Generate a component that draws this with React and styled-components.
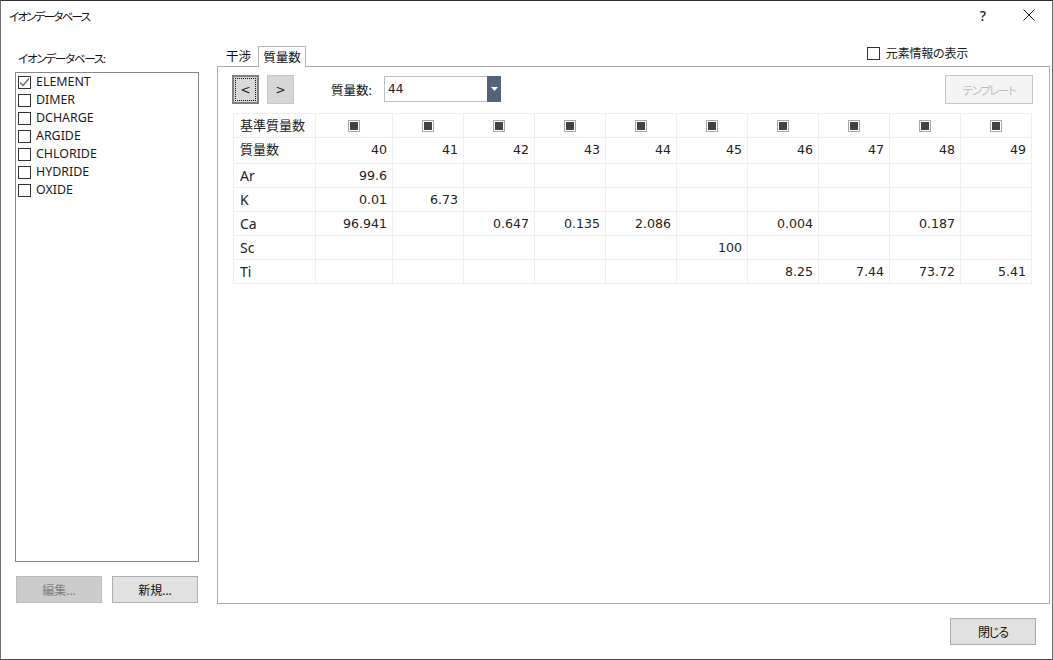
import React from "react";
import styled, { createGlobalStyle } from "styled-components";

const Global = createGlobalStyle`
  html, body { margin: 0; padding: 0; background: #fff; }
  * { box-sizing: border-box; }
  body { font-family: "Noto Sans", "Noto Sans CJK JP", sans-serif; font-size: 12px; color: #111; }
`;
const kana = `font-family: "Noto Sans", "Noto Sans CJK JP", sans-serif; font-feature-settings: "palt";`;

const Window = styled.div`
  width: 1053px; height: 660px; display: flex; flex-direction: column; background: #fff;
  border: 1px solid #6f6f6f; border-top-color: #2e2e2e; border-bottom-color: #4a4a4a; overflow: hidden;
`;
const TitleBar = styled.div`
  height: 32px; flex: none; display: flex; align-items: center; padding-left: 8px; position: relative;
`;
const Title = styled.div`${kana} font-size: 11.5px; letter-spacing: -1.75px; line-height: 30px;`;
const TitleActions = styled.div`margin-left: auto; display: flex; align-items: center; padding: 0 17px 4px 0; gap: 37px;`;
const Help = styled.span`font-family: "Noto Sans", sans-serif; font-size: 14px; font-weight: 500; color: #222;`;

const Content = styled.div`flex: none; height: 571px; display: flex; padding-top: 13px; padding-left: 14px;`;
const Sidebar = styled.div`width: 184px; display: flex; flex-direction: column; padding-bottom: 1px;`;
const SideLabel = styled.div`${kana} height: 26px; font-size: 11.5px; line-height: 25px; padding-left: 3px; letter-spacing: -1.2px;`;
const List = styled.div`flex: 1; border: 1px solid #828790; display: flex; flex-direction: column;`;
const ListRow = styled.div`height: 18px; display: flex; align-items: center; padding-left: 2px; gap: 5px; line-height: 18px; font-size: 12.4px; color: #1a1a1a;`;
const Box = styled.span`
  width: 13px; height: 13px; flex: none; border: 1px solid #333; background: #fff; display: flex; align-items: center; justify-content: center;
`;
const SideButtons = styled.div`display: flex; gap: 10px; margin-top: 14px; padding-left: 1px;`;
const Btn = styled.button`
  ${kana} font-size: 12px; height: 27px; width: ${p => p.$w || 86}px; padding: 0;
  background: ${p => (p.$disabled ? "#cccccc" : "#e1e1e1")};
  border: 1px solid ${p => (p.$disabled ? "#bcbcbc" : "#adadad")};
  color: ${p => (p.$disabled ? "#808080" : "#111")};
`;
const CloseBtn = styled(Btn)`letter-spacing: -1px;`;

const Main = styled.div`width: 833px; margin-left: 18px; display: flex; flex-direction: column;`;
const TabRow = styled.div`height: 21px; flex: none; display: flex; margin-bottom: -1px; position: relative; z-index: 1;`;
const Tab = styled.div`
  ${kana} height: ${p => (p.$active ? 21 : 20)}px; width: ${p => p.$w}px; text-align: center; line-height: 21px; font-size: 12.5px;
  ${p => (p.$active ? "border: 1px solid #b4b4b4; border-bottom: 0; background: #fff;" : "padding-left: 2px;")}
`;
const ElementToggle = styled.label`
  ${kana} margin-left: auto; margin-right: 82px; display: flex; align-items: flex-start; gap: 6px; line-height: 14px; margin-top: 1px; letter-spacing: -0.2px; color: #1a1a1a;
`;
const Panel = styled.div`flex: 1; border: 1px solid #acacac; background: #fff; padding: 8px 16px 0 15px;`;
const Toolbar = styled.div`height: 29px; margin: 0 0 9px -1px; display: flex; align-items: center;`;
const Nav = styled.button`
  width: 27px; height: 29px; padding: 0; margin-right: 8px; position: relative; font-family: "DejaVu Sans", sans-serif; font-size: 12px; color: #222;
  background: ${p => (p.$focus ? "#d9d9d9" : "#d6d6d6")};
  border: ${p => (p.$focus ? "1px solid #808080" : "1px solid #c8c8c8")};
  ${p => (p.$focus ? "outline: 1px dotted #111; outline-offset: -4px; box-shadow: inset 0 0 0 1px #808080;" : "")}
`;
const MassLabel = styled.span`margin-left: 29px; width: 53px; font-size: 12.5px; ${kana}`;
const Combo = styled.div`
  width: 117px; height: 26px; margin-top: -2px; display: flex; border: 1px solid #b8c0c4; align-items: stretch;
`;
const ComboValue = styled.span`flex: 1; padding-left: 3px; line-height: 24px; font-family: "DejaVu Sans", sans-serif; font-size: 12px; color: #222;`;
const ComboArrow = styled.span`width: 14px; margin: -1px -1px -1px 0; background: #53637a; display: flex; align-items: center; justify-content: center;`;
const Template = styled.button`
  ${kana} margin-left: auto; width: 88px; height: 29px; padding: 0; background: #f4f4f4; border: 1px solid #c6c6c6; color: #bdbdbd; font-size: 11.5px; letter-spacing: -1.4px;
`;

const Grid = styled.div`
  display: grid; grid-template-columns: 82px 77px repeat(9, 71px); width: 799px;
  border-left: 1px solid #eeeeee; border-top: 1px solid #eeeeee; margin-bottom: ${p => p.$gap || 0}px;
`;
const Cell = styled.div`
  height: 24px; padding: 0 5px 0 0; border-right: 1px solid #eeeeee;
  border-bottom: ${p => (p.$open ? "0" : "1px solid #eeeeee")};
  font-family: "DejaVu Sans", sans-serif; font-size: 12.6px; color: #222; text-align: right; line-height: 23px; white-space: nowrap;
`;
const NameCell = styled(Cell)`text-align: left; padding-left: 6px; font-size: ${p => p.$size || 13}px; font-family: "Noto Sans", "Noto Sans CJK JP", sans-serif;`;
const CheckCell = styled(Cell)`display: flex; align-items: center; justify-content: center; padding: 0;`;
const Square = styled.span`
  width: 12px; height: 12px; border: 1px solid #a8a8a8; display: flex; align-items: center; justify-content: center; background: #fff;
  &::after { content: ""; width: 8px; height: 8px; background: #434343; }
`;
const Footer = styled.div`flex: 1; display: flex; justify-content: flex-end; padding: 14px 16px 0 0;`;

const masses = [40, 41, 42, 43, 44, 45, 46, 47, 48, 49];
const rows = [
  ["Ar", { 40: "99.6" }],
  ["K", { 40: "0.01", 41: "6.73" }],
  ["Ca", { 40: "96.941", 42: "0.647", 43: "0.135", 44: "2.086", 46: "0.004", 48: "0.187" }],
  ["Sc", { 45: "100" }],
  ["Ti", { 46: "8.25", 47: "7.44", 48: "73.72", 49: "5.41" }],
];
const lists = ["ELEMENT", "DIMER", "DCHARGE", "ARGIDE", "CHLORIDE", "HYDRIDE", "OXIDE"];

export default function App() {
  return (
    <>
      <Global />
      <Window>
        <TitleBar>
          <Title>イオンデータベース</Title>
          <TitleActions>
            <Help>?</Help>
            <svg width="12" height="12" viewBox="0 0 12 12"><path d="M.5.5l11 11M11.5.5l-11 11" stroke="#222" strokeWidth="1" fill="none" /></svg>
          </TitleActions>
        </TitleBar>
        <Content>
          <Sidebar>
            <SideLabel>イオンデータベース:</SideLabel>
            <List>
              {lists.map((n, i) => (
                <ListRow key={n}>
                  <Box>
                    {i === 0 && <svg width="11" height="11" viewBox="0 0 11 11"><path d="M1 5.5l3 3 6-7" stroke="#666" strokeWidth="1.3" fill="none" /></svg>}
                  </Box>
                  {n}
                </ListRow>
              ))}
            </List>
            <SideButtons>
              <Btn $disabled>編集...</Btn>
              <Btn>新規...</Btn>
            </SideButtons>
          </Sidebar>
          <Main>
            <TabRow>
              <Tab $w={41}>干渉</Tab>
              <Tab $active $w={48}>質量数</Tab>
              <ElementToggle><Box />元素情報の表示</ElementToggle>
            </TabRow>
            <Panel>
              <Toolbar>
                <Nav $focus>&lt;</Nav>
                <Nav>&gt;</Nav>
                <MassLabel>質量数:</MassLabel>
                <Combo>
                  <ComboValue>44</ComboValue>
                  <ComboArrow>
                    <svg width="7" height="4" viewBox="0 0 7 4"><path d="M0 0h7L3.5 4z" fill="#fff" /></svg>
                  </ComboArrow>
                </Combo>
                <Template>テンプレート</Template>
              </Toolbar>
              <Grid $gap={1}>
                <NameCell>基準質量数</NameCell>
                {masses.map(m => <CheckCell key={m}><Square /></CheckCell>)}
                <NameCell $open>質量数</NameCell>
                {masses.map(m => <Cell key={m} $open>{m}</Cell>)}
              </Grid>
              <Grid>
                {rows.map(([name, vals]) => (
                  <React.Fragment key={name}>
                    <NameCell $size={14}>{name}</NameCell>
                    {masses.map(m => <Cell key={m}>{vals[m] || ""}</Cell>)}
                  </React.Fragment>
                ))}
              </Grid>
            </Panel>
          </Main>
        </Content>
        <Footer>
          <CloseBtn>閉じる</CloseBtn>
        </Footer>
      </Window>
    </>
  );
}
